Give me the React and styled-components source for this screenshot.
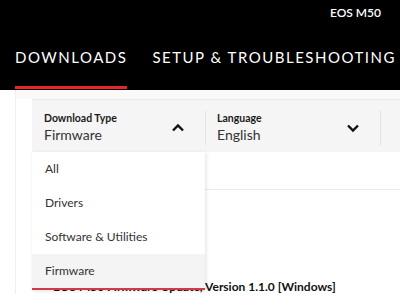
import styled, { createGlobalStyle } from "styled-components";

const Global = createGlobalStyle`
  body {
    margin: 0;
    background: #fff;
    font-family: Lato, "Open Sans", sans-serif;
    overflow: hidden;
  }
`;

export default function App() {
  const options = ["All", "Drivers", "Software & Utilities", "Firmware"];

  return (
    <>
      <Global />
      <Header>
        <Model>EOS M50</Model>
        <Nav>
          <NavItem active>DOWNLOADS</NavItem>
          <NavItem>SETUP &amp; TROUBLESHOOTING</NavItem>
        </Nav>
      </Header>
      <Page>
        <Panel>
          <FilterBar>
            <Filter>
              <FilterText>
                <Label>Download Type</Label>
                <Value>Firmware</Value>
              </FilterText>
              <Chevron up />
              <Menu>
                {options.map((o) => (
                  <Option key={o} selected={o === "Firmware"}>{o}</Option>
                ))}
              </Menu>
            </Filter>
            <Filter>
              <FilterText>
                <Label>Language</Label>
                <Value>English</Value>
              </FilterText>
              <Chevron />
            </Filter>
            <Filter />
          </FilterBar>
          <Results>
            <TableHead />
            <Title>EOS M50 Firmware Update, Version 1.1.0 [Windows]</Title>
          </Results>
        </Panel>
      </Page>
    </>
  );
}

function Chevron({ up }) {
  return (
    <ChevronIcon width="14" height="10" viewBox="0 0 14 10">
      <path
        d={up ? "M2 7.5 L7 2.5 L12 7.5" : "M2 2.5 L7 7.5 L12 2.5"}
        fill="none"
        stroke="#111"
        strokeWidth="2.4"
      />
    </ChevronIcon>
  );
}

const Header = styled.header`
  background: #000;
  height: 90px;
  white-space: nowrap;
  overflow: hidden;
`;

const Model = styled.div`
  color: #fff;
  font-weight: 600;
  font-size: 12px;
  text-align: right;
  padding: 5px 19px 0 0;
  line-height: 16px;
`;

const Nav = styled.nav`
  display: flex;
  gap: 25px;
  padding: 26px 0 0 15px;
`;

const NavItem = styled.div`
  color: #fff;
  font-size: 15px;
  letter-spacing: 1.5px;
  line-height: 20px;
  padding-bottom: 19px;
  border-bottom: 3px solid ${(p) => (p.active ? "#e52628" : "transparent")};
`;

const Page = styled.main`
  padding-left: 15px;
`;

const Panel = styled.div`
  border-left: 1px solid #eee;
  padding: 9px 0 0 16px;
  background: linear-gradient(#f9f9f9, #f9f9f9) 0 0 / 100% 9px no-repeat;
`;

const FilterBar = styled.div`
  display: grid;
  grid-template-columns: 173px 175px 1fr;
  height: 52px;
  background: #f5f5f5;
  border-top: 1px solid #ebebeb;
`;

const Filter = styled.div`
  position: relative;
  display: flex;
  align-items: center;
  justify-content: space-between;
  padding: 0 20px 0 12px;
  & + & {
    &::before {
      content: "";
      position: absolute;
      left: 0;
      top: 11px;
      bottom: 7px;
      width: 1px;
      background: #e2e2e2;
    }
  }
`;

const FilterText = styled.div`
  display: flex;
  flex-direction: column;
  padding-top: 4px;
`;

const Label = styled.span`
  font-size: 10.5px;
  font-weight: 700;
  color: #1a1a1a;
  line-height: 14px;
`;

const Value = styled.span`
  font-size: 14px;
  color: #333;
  line-height: 20px;
`;

const ChevronIcon = styled.svg`
  display: block;
  margin-top: 3px;
`;

const Menu = styled.ul`
  position: absolute;
  z-index: 2;
  top: 52px;
  left: 0;
  width: 173px;
  margin: 0;
  padding: 0;
  list-style: none;
  background: #fff;
  box-shadow: 1px 1px 4px rgba(0, 0, 0, 0.12);
  border-bottom: 2px solid #d33a46;
`;

const Option = styled.li`
  height: 34px;
  line-height: 33px;
  padding: 0 13px;
  font-size: 12px;
  color: #333;
  background: ${(p) => (p.selected ? "#f4f4f4" : "#fff")};
`;

const Results = styled.div`
  background: #fff;
`;

const TableHead = styled.div`
  height: 37px;
  border-bottom: 1px solid #ebebeb;
  margin-left: 173px;
`;

const Title = styled.div`
  padding: 89px 0 0 21px;
  font-size: 12px;
  font-weight: 700;
  color: #111;
  white-space: nowrap;
`;
